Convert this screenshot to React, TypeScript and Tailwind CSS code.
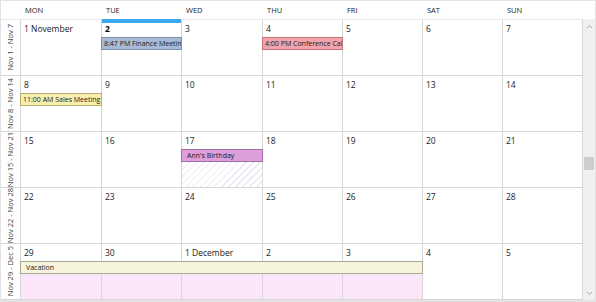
import React from 'react';

type Day = { label: string; bold?: boolean };
type Ev = { col: string; span?: string; text: string; allDay?: boolean; className: string };

const COLS = 'grid grid-cols-[81px_80px_81px_80px_80px_80px_80px] grid-rows-[17px_13px_1fr]';
const COL_START = ['col-start-1', 'col-start-2', 'col-start-3', 'col-start-4', 'col-start-5', 'col-start-6', 'col-start-7'];

const weeks: { label: string; first?: boolean; days: Day[]; events: Ev[]; under?: { col: string; className: string }[] }[] = [
    {
        label: 'Nov 1 - Nov 7',
        first: true,
        days: [{ label: '1 November' }, { label: '2', bold: true }, { label: '3' }, { label: '4' }, { label: '5' }, { label: '6' }, { label: '7' }],
        events: [
            { col: 'col-start-2', text: '8:47 PM Finance Meeting', className: 'bg-[#a9bad6] border-[#7d8fae]' },
            { col: 'col-start-4', text: '4:00 PM Conference Call', className: 'bg-[#f2a4ad] border-[#c4737d]' },
        ],
    },
    {
        label: 'Nov 8 - Nov 14',
        days: ['8', '9', '10', '11', '12', '13', '14'].map((d) => ({ label: d })),
        events: [{ col: 'col-start-1', text: '11:00 AM Sales Meeting', className: 'bg-[#f7efb0] border-[#b9ab6a]' }],
    },
    {
        label: 'Nov 15 - Nov 21',
        days: ['15', '16', '17', '18', '19', '20', '21'].map((d) => ({ label: d })),
        events: [{ col: 'col-start-3', text: "Ann's Birthday", allDay: true, className: 'bg-[#dc9fdc] border-[#a36ea3]' }],
        under: [
            {
                col: 'col-start-3',
                className: 'bg-[repeating-linear-gradient(135deg,#ebe6f6_0px,#ebe6f6_1px,#ffffff_1px,#ffffff_5px)]',
            },
        ],
    },
    {
        label: 'Nov 22 - Nov 28',
        days: ['22', '23', '24', '25', '26', '27', '28'].map((d) => ({ label: d })),
        events: [],
    },
    {
        label: 'Nov 29 - Dec 5',
        days: [{ label: '29' }, { label: '30' }, { label: '1 December' }, { label: '2' }, { label: '3' }, { label: '4' }, { label: '5' }],
        events: [{ col: 'col-start-1', span: 'col-span-5', text: 'Vacation', allDay: true, className: 'bg-[#f6f4dc] border-[#a9a892]' }],
        under: ['col-start-1', 'col-start-2', 'col-start-3', 'col-start-4', 'col-start-5'].map((c) => ({
            col: c,
            className: 'bg-[#fbe5fa]',
        })),
    },
];

const HEADER = ['MON', 'TUE', 'WED', 'THU', 'FRI', 'SAT', 'SUN'];

export default function App() {
    return (
        <div
            className="w-[596px] h-[302px] bg-white border border-[#e2e2e2] border-b-2 flex flex-col overflow-hidden select-none text-[#1a1a1a]"
            style={{ fontFamily: '"Segoe UI", "Open Sans", sans-serif' }}
        >
            <div className="flex h-[18px] shrink-0">
                <div className="w-[20px]" />
                <div className="grid grid-cols-[81px_80px_81px_80px_80px_80px_80px]">
                    {HEADER.map((name, i) => (
                        <div key={name} className="relative flex items-center pl-[4px] pt-[1px] text-[7.5px] text-[#222]">
                            {name}
                            {i === 1 && <div className="absolute left-0 right-[1px] -bottom-[4px] h-[4px] bg-[#3aa9f0] z-10" />}
                        </div>
                    ))}
                </div>
            </div>

            <div className="flex flex-1 min-h-0">
                <div className="flex flex-col">
                    {weeks.map((week) => (
                        <div
                            key={week.label}
                            className={`flex border-b border-[#d6d6d6] ${week.first ? 'h-[57px] border-t border-t-[#e8e8e8]' : 'h-[56px]'}`}
                        >
                            <div className="w-[20px] border-r border-[#d6d6d6] overflow-hidden flex items-center justify-center">
                                <span className="[writing-mode:vertical-rl] rotate-180 whitespace-nowrap text-[7.5px] text-[#444]">
                                    {week.label}
                                </span>
                            </div>
                            <div className={COLS}>
                                {week.days.map((day, i) => (
                                    <div key={i} className={`${COL_START[i]} row-start-1 row-span-3 border-r border-[#d6d6d6]`} />
                                ))}
                                {week.under?.map((u, i) => (
                                    <div key={`u${i}`} className={`${u.col} row-start-3 mr-px ${u.className}`} />
                                ))}
                                {week.days.map((day, i) => (
                                    <div
                                        key={`d${i}`}
                                        className={`${COL_START[i]} row-start-1 pl-[3px] pt-[2px] text-[8.5px] leading-[14px] ${day.bold ? 'font-bold text-black' : ''}`}
                                    >
                                        {day.label}
                                    </div>
                                ))}
                                {week.events.map((ev) => (
                                    <div
                                        key={ev.text}
                                        className={`${ev.col} ${ev.span ?? ''} row-start-2 -ml-px border overflow-hidden whitespace-nowrap ${ev.allDay ? 'pl-[5px]' : 'pl-[2px]'} text-[7px] leading-[11px] text-[#1a1a1a] ${ev.className}`}
                                    >
                                        {ev.text}
                                    </div>
                                ))}
                            </div>
                        </div>
                    ))}
                </div>

                <div className="w-[12px] bg-[#f0f0f0] flex flex-col items-center text-[#9a9a9a]">
                    <svg width="7" height="5" viewBox="0 0 7 5" className="mt-[5px]">
                        <path d="M1 4 L3.5 1.5 L6 4" fill="none" stroke="currentColor" strokeWidth="0.8" />
                    </svg>
                    <div className="w-[10px] h-[13px] bg-[#cdcdcd] mt-[128px]" />
                    <div className="flex-1" />
                    <svg width="7" height="5" viewBox="0 0 7 5" className="mb-[4px]">
                        <path d="M1 1 L3.5 3.5 L6 1" fill="none" stroke="currentColor" strokeWidth="0.8" />
                    </svg>
                </div>
            </div>
        </div>
    );
}
